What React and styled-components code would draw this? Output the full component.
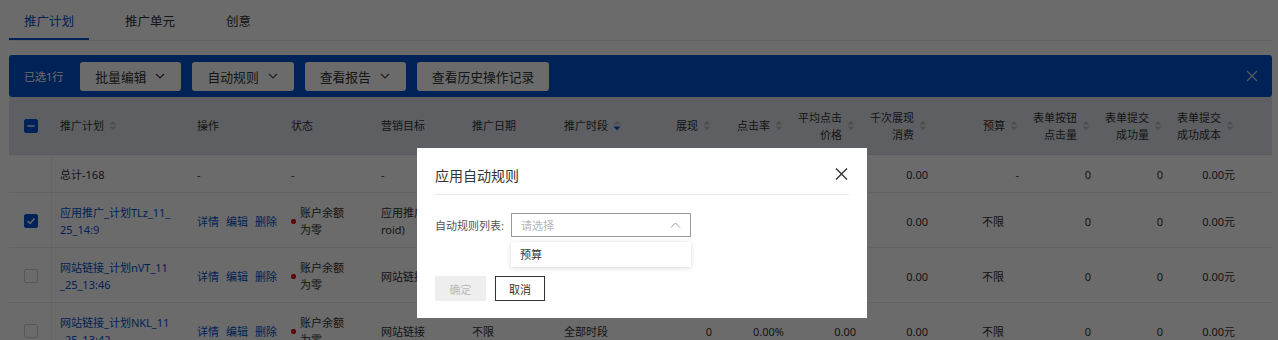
import React from 'react';
import styled, { createGlobalStyle } from 'styled-components';

const BLUE = '#0052cc';

const GlobalStyle = createGlobalStyle`
  html, body { margin: 0; padding: 0; overflow: hidden; background: #fff; }
  body { font-family: "Noto Sans", "Noto Sans CJK SC", sans-serif; color: #333; }
  * { box-sizing: border-box; }
`;

const Page = styled.div`
  width: 1278px;
  height: 340px;
  padding: 0 6px 0 9px;
  overflow: hidden;
`;

const TabBar = styled.div`
  display: flex;
  gap: 21px;
  height: 41px;
  border-bottom: 1px solid #e8e8e8;
`;

const Tab = styled.div`
  height: 40px;
  padding: 2px 15px 0;
  display: flex;
  align-items: center;
  font-size: 12.5px;
  color: ${(p) => (p.$active ? BLUE : '#333')};
  border-bottom: 2px solid ${(p) => (p.$active ? BLUE : 'transparent')};
`;

const BatchBar = styled.div`
  margin-top: 14px;
  height: 42px;
  background: ${BLUE};
  border-radius: 3px;
  display: flex;
  align-items: center;
  padding: 0 14px 0 15px;
`;

const Selected = styled.span`
  font-size: 11px;
  color: #fff;
  margin-right: 17px;
`;

const BarButtons = styled.div`
  display: flex;
  gap: 11px;
  flex: 1;
`;

const BarButton = styled.button`
  height: 29px;
  padding: 0 ${(p) => (p.$menu ? 16 : 15)}px 0 15px;
  border: none;
  border-radius: 3px;
  background: #fff;
  color: #333;
  font-family: inherit;
  font-size: 12.8px;
  display: flex;
  align-items: center;
  gap: 9px;
`;

const Chevron = styled.svg`
  display: block;
`;

const BarClose = styled.svg`
  display: block;
`;

const TableWrap = styled.div`
  width: 100%;
  overflow: hidden;
`;

const Table = styled.table`
  table-layout: fixed;
  border-collapse: separate;
  border-spacing: 0;
  width: ${(p) => p.$width}px;
  font-size: 11px;
`;

const Th = styled.th`
  height: 58px;
  padding: 0 ${(p) => (p.$right ? 9 : 8)}px 0 ${(p) => p.$padLeft ?? 8}px;
  background: #e1e3ed;
  border-bottom: 1px solid #d6d8e0;
  font-weight: normal;
  color: #333;
  line-height: 17px;
  vertical-align: middle;
`;

const HeadInner = styled.div`
  display: flex;
  align-items: center;
  justify-content: ${(p) => (p.$right ? 'flex-end' : 'flex-start')};
  gap: 5px;
`;

const HeadText = styled.div`
  text-align: ${(p) => (p.$right ? 'right' : 'left')};
  white-space: nowrap;
`;

const SortSvg = styled.svg`
  display: block;
  flex-shrink: 0;
`;

const Td = styled.td`
  padding: 11px 8px 9px;
  padding-left: ${(p) => p.$padLeft ?? 8}px;
  border-bottom: 1px solid #e8e8e8;
  border-right: ${(p) => (p.$divider ? '1px solid #f0f0f0' : 'none')};
  line-height: 17px;
  vertical-align: middle;
  text-align: ${(p) => p.$align || 'left'};
  color: #333;
  white-space: nowrap;
  overflow: hidden;
`;

const Lines = styled.div`
  display: flex;
  flex-direction: column;
  color: ${(p) => (p.$link ? BLUE : '#333')};
`;

const Ops = styled.div`
  display: flex;
  gap: 7px;
`;

const OpLink = styled.a`
  color: ${BLUE};
  text-decoration: none;
`;

const StatusWrap = styled.div`
  display: flex;
  align-items: center;
  gap: 4px;
`;

const Dot = styled.span`
  width: 5px;
  height: 5px;
  border-radius: 2px;
  background: #e0141e;
  flex-shrink: 0;
`;

const Box = styled.span`
  display: block;
  width: 14px;
  height: 14px;
  margin-left: 7px;
  border-radius: 2px;
  background: ${(p) => (p.$on ? BLUE : '#fff')};
  border: 1px solid ${(p) => (p.$on ? BLUE : '#d0d0d0')};
`;

const Mask = styled.div`
  position: fixed;
  inset: 0;
  background: rgba(0, 0, 0, 0.58);
`;

const Modal = styled.div`
  position: fixed;
  top: 148px;
  left: 417px;
  width: 450px;
  height: 170px;
  background: #fff;
`;

const ModalHeader = styled.div`
  margin: 0 18px;
  padding: 18px 0 8px;
  border-bottom: 1px solid #e8e8e8;
  font-size: 14px;
  line-height: 20px;
  color: #333;
`;

const ModalClose = styled.svg`
  position: absolute;
  top: 20px;
  right: 19px;
  display: block;
`;

const ModalBody = styled.div`
  padding: 18px 18px 0;
`;

const FormRow = styled.div`
  display: flex;
  align-items: center;
  height: 24px;
`;

const Label = styled.span`
  font-size: 11px;
  color: #555;
  margin-right: 7px;
`;

const SelectWrap = styled.div`
  position: relative;
  width: 180px;
`;

const SelectBox = styled.div`
  height: 24px;
  border: 1px solid #999;
  padding: 0 9px;
  display: flex;
  align-items: center;
  justify-content: space-between;
  font-size: 11px;
  color: #b5b5b5;
`;

const Dropdown = styled.div`
  position: absolute;
  top: 29px;
  left: 0;
  width: 180px;
  background: #fff;
  box-shadow: 0 1px 5px rgba(0, 0, 0, 0.16);
`;

const Option = styled.div`
  height: 25px;
  line-height: 25px;
  padding: 0 9px;
  font-size: 11px;
  color: #333;
`;

const Actions = styled.div`
  display: flex;
  gap: 9px;
  margin-top: 39px;
`;

const ModalButton = styled.button`
  width: ${(p) => (p.$primary ? 51 : 50)}px;
  height: 25px;
  padding: 0;
  font-family: inherit;
  font-size: 11px;
  background: ${(p) => (p.$primary ? '#eeeeee' : '#fff')};
  color: ${(p) => (p.$primary ? '#bbb' : '#333')};
  border: ${(p) => (p.$primary ? 'none' : '1px solid #333')};
`;

const SortIcon = ({ active }) => (
  <SortSvg width="8" height="11" viewBox="0 0 8 11">
    <path d="M4 0.5 L7.5 4.5 L0.5 4.5 Z" fill="#bdbdbd" />
    <path d="M0.5 6.5 L7.5 6.5 L4 10.5 Z" fill={active ? BLUE : '#bdbdbd'} />
  </SortSvg>
);

const Check = ({ mode }) => (
  <Box $on={mode !== 'off'}>
    {mode === 'on' && (
      <svg width="12" height="12" viewBox="0 0 12 12" style={{ display: 'block' }}>
        <path d="M2.5 6 L5 8.5 L9.5 3.5" fill="none" stroke="#fff" strokeWidth="1.4" />
      </svg>
    )}
    {mode === 'some' && (
      <svg width="12" height="12" viewBox="0 0 12 12" style={{ display: 'block' }}>
        <path d="M2.5 6 H9.5" stroke="#fff" strokeWidth="1.4" />
      </svg>
    )}
  </Box>
);

const columns = [
  { key: 'check', w: 43 },
  { key: 'name', title: ['推广计划'], w: 137, sort: true },
  { key: 'ops', title: ['操作'], w: 94 },
  { key: 'status', title: ['状态'], w: 90 },
  { key: 'target', title: ['营销目标'], w: 91 },
  { key: 'date', title: ['推广日期'], w: 92 },
  { key: 'period', title: ['推广时段'], w: 84, sort: true, active: true },
  { key: 'impr', title: ['展现'], w: 80, right: true, sort: true },
  { key: 'ctr', title: ['点击率'], w: 72, right: true, sort: true },
  { key: 'cpc', title: ['平均点击', '价格'], w: 72, right: true, sort: true },
  { key: 'cpm', title: ['千次展现', '消费'], w: 72, right: true, sort: true },
  { key: 'budget', title: ['预算'], w: 91, right: true, sort: true },
  { key: 'clicks', title: ['表单按钮', '点击量'], w: 72, right: true, sort: true },
  { key: 'submits', title: ['表单提交', '成功量'], w: 72, right: true, sort: true },
  { key: 'cost', title: ['表单提交', '成功成本'], w: 72, right: true, sort: true },
  { key: 'extra', title: [], w: 100 },
];

const metrics = { impr: '0', ctr: '0.00%', cpc: '0.00', cpm: '0.00', clicks: '0', submits: '0', cost: '0.00元' };

const rows = [
  { total: true, check: null, name: ['总计-168'], ops: '-', status: '-', target: '-', date: '-', period: '-', ...metrics, budget: '-' },
  { check: 'on', name: ['应用推广_计划TLz_11_', '25_14:9'], ops: true, status: ['账户余额', '为零'], target: ['应用推广(And', 'roid)'], date: '不限', period: '全部时段', ...metrics, budget: '不限' },
  { check: 'off', name: ['网站链接_计划nVT_11', '_25_13:46'], ops: true, status: ['账户余额', '为零'], target: ['网站链接'], date: '不限', period: '全部时段', ...metrics, budget: '不限' },
  { check: 'off', name: ['网站链接_计划NKL_11', '_25_13:42'], ops: true, status: ['账户余额', '为零'], target: ['网站链接'], date: '不限', period: '全部时段', ...metrics, budget: '不限' },
];

const tableWidth = columns.reduce((s, c) => s + c.w, 0);

function renderCell(col, row) {
  const v = row[col.key];
  switch (col.key) {
    case 'check':
      return (
        <Td key={col.key} $padLeft={8} $divider>
          {row.check && <Check mode={row.check} />}
        </Td>
      );
    case 'name':
      return (
        <Td key={col.key}>
          <Lines $link={!row.total}>
            {v.map((l) => (
              <span key={l}>{l}</span>
            ))}
          </Lines>
        </Td>
      );
    case 'ops':
      return (
        <Td key={col.key}>
          {v === true ? (
            <Ops>
              <OpLink>详情</OpLink>
              <OpLink>编辑</OpLink>
              <OpLink>删除</OpLink>
            </Ops>
          ) : (
            v
          )}
        </Td>
      );
    case 'status':
      return (
        <Td key={col.key}>
          {Array.isArray(v) ? (
            <StatusWrap>
              <Dot />
              <Lines>
                {v.map((l) => (
                  <span key={l}>{l}</span>
                ))}
              </Lines>
            </StatusWrap>
          ) : (
            v
          )}
        </Td>
      );
    case 'target':
      return (
        <Td key={col.key}>
          {Array.isArray(v) ? (
            <Lines>
              {v.map((l) => (
                <span key={l}>{l}</span>
              ))}
            </Lines>
          ) : (
            v
          )}
        </Td>
      );
    case 'budget':
      return v === '不限' ? (
        <Td key={col.key} $padLeft={46}>
          {v}
        </Td>
      ) : (
        <Td key={col.key} $align="right">
          {v}
        </Td>
      );
    case 'extra':
      return <Td key={col.key} />;
    default:
      return (
        <Td key={col.key} $align={col.right ? 'right' : 'left'}>
          {v}
        </Td>
      );
  }
}

export default function App() {
  return (
    <>
      <GlobalStyle />
      <Page>
        <TabBar>
          <Tab $active>推广计划</Tab>
          <Tab>推广单元</Tab>
          <Tab>创意</Tab>
        </TabBar>

        <BatchBar>
          <Selected>已选1行</Selected>
          <BarButtons>
            {['批量编辑', '自动规则', '查看报告'].map((t) => (
              <BarButton key={t} $menu>
                {t}
                <Chevron width="10" height="6" viewBox="0 0 10 6">
                  <path d="M1 1 L5 5 L9 1" fill="none" stroke="#444" strokeWidth="1.2" />
                </Chevron>
              </BarButton>
            ))}
            <BarButton>查看历史操作记录</BarButton>
          </BarButtons>
          <BarClose width="12" height="12" viewBox="0 0 12 12">
            <path d="M1 1 L11 11 M11 1 L1 11" stroke="#c9d3e3" strokeWidth="1.3" />
          </BarClose>
        </BatchBar>

        <TableWrap>
          <Table $width={tableWidth}>
            <colgroup>
              {columns.map((c) => (
                <col key={c.key} style={{ width: c.w }} />
              ))}
            </colgroup>
            <thead>
              <tr>
                {columns.map((c) =>
                  c.key === 'check' ? (
                    <Th key={c.key} $padLeft={8}>
                      <Check mode="some" />
                    </Th>
                  ) : (
                    <Th key={c.key} $right={c.right}>
                      <HeadInner $right={c.right}>
                        {c.title.length > 0 && (
                          <HeadText $right={c.right}>
                            {c.title.map((l) => (
                              <div key={l}>{l}</div>
                            ))}
                          </HeadText>
                        )}
                        {c.sort && <SortIcon active={c.active} />}
                      </HeadInner>
                    </Th>
                  )
                )}
              </tr>
            </thead>
            <tbody>
              {rows.map((r, i) => (
                <tr key={i}>{columns.map((c) => renderCell(c, r))}</tr>
              ))}
            </tbody>
          </Table>
        </TableWrap>
      </Page>

      <Mask />
      <Modal>
        <ModalHeader>应用自动规则</ModalHeader>
        <ModalClose width="13" height="12" viewBox="0 0 13 12">
          <path d="M1 0.5 L12 11.5 M12 0.5 L1 11.5" stroke="#333" strokeWidth="1.4" />
        </ModalClose>
        <ModalBody>
          <FormRow>
            <Label>自动规则列表:</Label>
            <SelectWrap>
              <SelectBox>
                请选择
                <svg width="11" height="6" viewBox="0 0 11 6" style={{ display: 'block' }}>
                  <path d="M1 5.5 L5.5 1 L10 5.5" fill="none" stroke="#999" strokeWidth="1" />
                </svg>
              </SelectBox>
              <Dropdown>
                <Option>预算</Option>
              </Dropdown>
            </SelectWrap>
          </FormRow>
          <Actions>
            <ModalButton $primary disabled>确定</ModalButton>
            <ModalButton>取消</ModalButton>
          </Actions>
        </ModalBody>
      </Modal>
    </>
  );
}
